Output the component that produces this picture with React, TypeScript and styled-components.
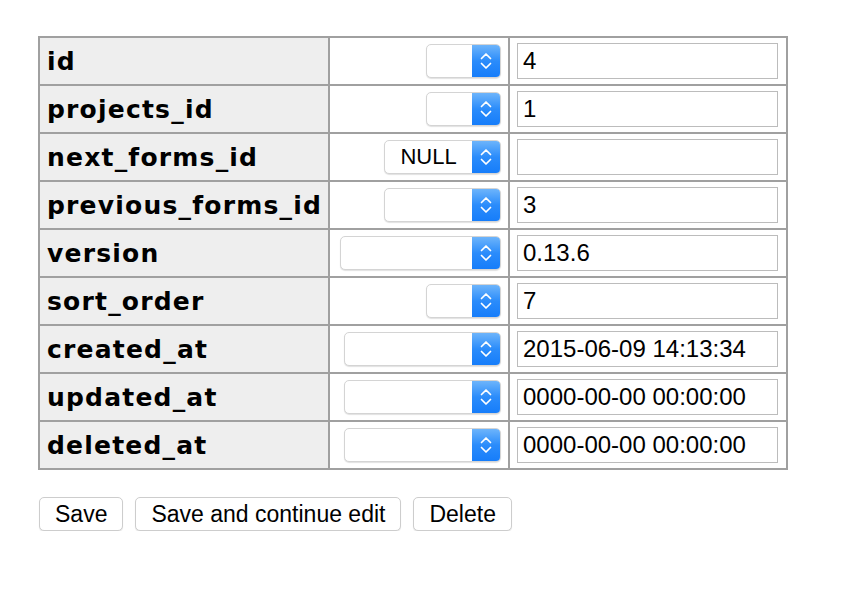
import React from 'react';
import styled, {createGlobalStyle} from 'styled-components'

interface FieldRow{
    name:string;
    selectWidth:number;
    selected:string;
    value:string;
}

const rows:FieldRow[]=[
    {name:"id",selectWidth:75,selected:"",value:"4"},
    {name:"projects_id",selectWidth:75,selected:"",value:"1"},
    {name:"next_forms_id",selectWidth:117,selected:"NULL",value:""},
    {name:"previous_forms_id",selectWidth:117,selected:"",value:"3"},
    {name:"version",selectWidth:161,selected:"",value:"0.13.6"},
    {name:"sort_order",selectWidth:75,selected:"",value:"7"},
    {name:"created_at",selectWidth:157,selected:"",value:"2015-06-09 14:13:34"},
    {name:"updated_at",selectWidth:157,selected:"",value:"0000-00-00 00:00:00"},
    {name:"deleted_at",selectWidth:157,selected:"",value:"0000-00-00 00:00:00"},
]

const Chevrons = () => (
    <svg width="14" height="20" viewBox="0 0 14 20" fill="none" stroke="white" strokeWidth="1.7" strokeLinecap="round" strokeLinejoin="round">
        <path d="M2.5 7.5 L7 3 L11.5 7.5"/>
        <path d="M2.5 12.5 L7 17 L11.5 12.5"/>
    </svg>
)

const App = () => {
    return (
    <>
        <GlobalStyle/>
        <Page>
            <EditGrid>
                {rows.map((row)=>(
                    <React.Fragment key={row.name}>
                        <LabelCell>{row.name}</LabelCell>
                        <SelectCell>
                            <MacSelect width={row.selectWidth}>
                                <SelectText>{row.selected}</SelectText>
                                <SelectArrows><Chevrons/></SelectArrows>
                            </MacSelect>
                        </SelectCell>
                        <ValueCell>
                            <ValueInput defaultValue={row.value}/>
                        </ValueCell>
                    </React.Fragment>
                ))}
            </EditGrid>
            <ButtonRow>
                <FormButton>Save</FormButton>
                <FormButton>Save and continue edit</FormButton>
                <FormButton>Delete</FormButton>
            </ButtonRow>
        </Page>
    </>
    )
}

const GlobalStyle = createGlobalStyle`
    body{
        margin:0;
        background:#fff;
        font-family:"Liberation Sans", Arial, sans-serif;
    }
`

const Page = styled.div`
    padding:36px 0 0 38px;
`

const EditGrid = styled.div`
    display:grid;
    grid-template-columns:288px 178px 276px;
    grid-auto-rows:46px;
    gap:2px;
    padding:2px;
    width:max-content;
    background:#a0a0a0;
`

const LabelCell = styled.div`
    display:flex;
    align-items:center;
    padding-left:7px;
    background:#eeeeee;
    font-family:"DejaVu Sans", Verdana, sans-serif;
    font-weight:bold;
    font-size:25px;
    letter-spacing:1.2px;
    color:#000;
`

const SelectCell = styled.div`
    display:flex;
    align-items:center;
    justify-content:flex-end;
    padding-right:7px;
    background:#fff;
`

const MacSelect = styled.div<{width:number}>`
    display:flex;
    width:${(props)=>props.width}px;
    height:34px;
    box-sizing:border-box;
    border:1px solid #d4d4d4;
    border-radius:5px;
    background:#fff;
    box-shadow:0 1px 1px rgba(0,0,0,0.12);
    overflow:hidden;
`

const SelectText = styled.div`
    flex:1;
    display:flex;
    align-items:center;
    justify-content:center;
    font-size:22px;
    color:#000;
`

const SelectArrows = styled.div`
    width:28px;
    display:flex;
    align-items:center;
    justify-content:center;
    background:linear-gradient(180deg,#6db4fb 0%,#2b8cfb 50%,#167dfa 100%);
`

const ValueCell = styled.div`
    display:flex;
    align-items:center;
    padding:0 8px 0 7px;
    background:#fff;
`

const ValueInput = styled.input`
    width:100%;
    height:36px;
    box-sizing:border-box;
    border:1px solid #bcbcbc;
    padding:0 5px;
    font-family:"Liberation Sans", Arial, sans-serif;
    font-size:24px;
    color:#000;
    outline:none;
`

const ButtonRow = styled.div`
    display:flex;
    gap:12px;
    margin-top:27px;
    padding-left:1px;
`

const FormButton = styled.button`
    height:34px;
    padding:0 15px;
    border:1px solid #cdcdcd;
    border-radius:5px;
    background:#fff;
    box-shadow:0 1px 1px rgba(0,0,0,0.1);
    font-family:"Liberation Sans", Arial, sans-serif;
    font-size:23px;
    color:#000;
    cursor:pointer;
`

export default App
